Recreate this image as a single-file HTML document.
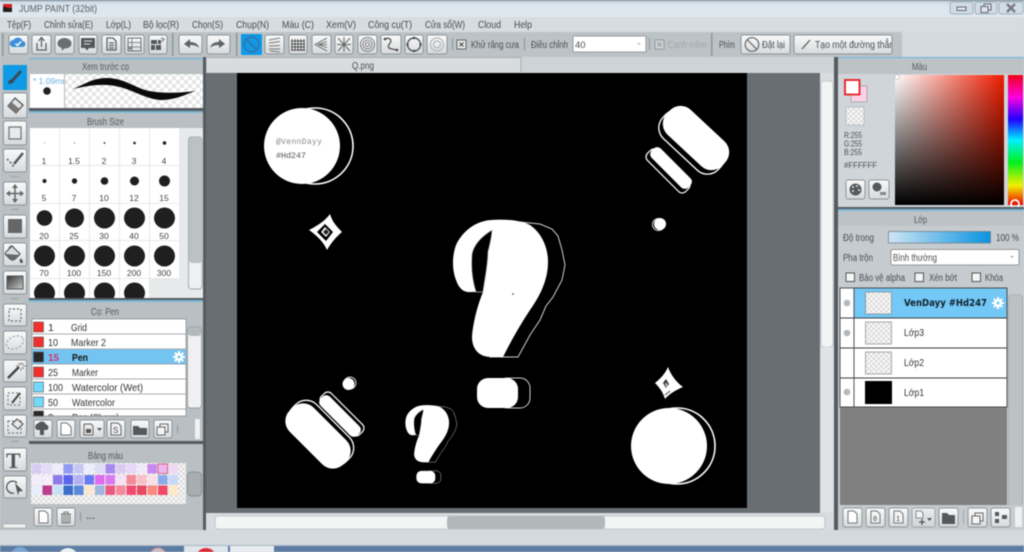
<!DOCTYPE html>
<html><head><meta charset="utf-8"><style>
html,body{margin:0;padding:0;background:#d3d9dc;width:1024px;height:552px;overflow:hidden}
svg{display:block;position:absolute;left:0;top:0;filter:blur(.4px)}
svg svg{position:static;filter:none}
text{font-family:"Liberation Sans",sans-serif;font-size:10px;fill:#4a4d50}
.m{font-size:10.5px;fill:#454a4e}
.b{fill:url(#bg);stroke:#8e9497;stroke-width:1}
.i{fill:#6a6f72}
.l{fill:none;stroke:#5e6366;stroke-width:1.3}
.h{fill:#55595c;font-size:10px}
.s{text-anchor:middle;font-size:8.5px;fill:#444}
.n{font-size:10.5px;fill:#333}
.d{fill:#1f1f1f}
</style></head><body>
<svg width="1024" height="552" viewBox="0 0 1024 552" xmlns="http://www.w3.org/2000/svg">
<defs>
<linearGradient id="bg" x1="0" y1="0" x2="0" y2="1"><stop offset="0" stop-color="#fafbfb"/><stop offset="1" stop-color="#d5d9db"/></linearGradient>
<linearGradient id="tb" x1="0" y1="0" x2="0" y2="1"><stop offset="0" stop-color="#c6d2dc"/><stop offset=".3" stop-color="#dbe6ee"/><stop offset="1" stop-color="#dfe8ee"/></linearGradient>
<linearGradient id="op" x1="0" y1="0" x2="1" y2="0"><stop offset="0" stop-color="#cfe6f5"/><stop offset="1" stop-color="#0a93e0"/></linearGradient>
<linearGradient id="sv1" x1="0" y1="0" x2="1" y2="0"><stop offset="0" stop-color="#fff"/><stop offset="1" stop-color="#f01c00"/></linearGradient>
<linearGradient id="sv2" x1="0" y1="0" x2="0" y2="1"><stop offset="0" stop-color="#000" stop-opacity="0"/><stop offset="1" stop-color="#000"/></linearGradient>
<linearGradient id="hue" x1="0" y1="0" x2="0" y2="1"><stop offset="0" stop-color="#f00018"/><stop offset=".17" stop-color="#ff00e0"/><stop offset=".34" stop-color="#2000ff"/><stop offset=".5" stop-color="#00f0ff"/><stop offset=".67" stop-color="#00f020"/><stop offset=".85" stop-color="#f0f000"/><stop offset="1" stop-color="#f00000"/></linearGradient>
<linearGradient id="gr" x1="0" y1="0" x2="1" y2="1"><stop offset="0" stop-color="#333"/><stop offset="1" stop-color="#ccc"/></linearGradient>
<pattern id="ck" width="8" height="8" patternUnits="userSpaceOnUse"><rect width="8" height="8" fill="#fff"/><rect width="4" height="4" fill="#e6e6e6"/><rect x="4" y="4" width="4" height="4" fill="#e6e6e6"/></pattern>
<pattern id="ck2" width="5" height="5" patternUnits="userSpaceOnUse"><rect width="5" height="5" fill="#f8f8f8"/><rect width="2.5" height="2.5" fill="#dcdcdc"/><rect x="2.5" y="2.5" width="2.5" height="2.5" fill="#dcdcdc"/></pattern>
<g id="qm">
<path fill="#000" stroke="#cfcfcf" stroke-width="1" d="M500 221 L520 222 L540 224 L552 229 L558 236 L562 250 L565 265 L562 280 L553 297 L546 306 L540 320 L530 335 L518 357 L490 357 L490 300 Z"/>
<path fill="#fff" d="M491 220C475 221 462 232 456 245C452 256 452 270 456 280C459 289 464 293 472 292L483 292C478 304 473 322 472 337C472 350 480 357 491 357L503 357C511 341 520 325 530 310C540 296 548 280 548 262C548 245 540 232 530 225C520 220 505 219 491 220Z"/>
<path fill="#000" stroke="#bbb" stroke-width=".7" d="M492 230C484 235 474 243 472 254C471 266 472 280 476 292L483 292C485 278 488 264 488 252C490 244 492 236 492 230Z"/>
<rect x="497" y="378" width="33" height="30" rx="10" fill="#000" stroke="#cfcfcf" stroke-width="1"/>
<rect x="477" y="378" width="41" height="30" rx="11" fill="#fff"/>
</g>
<g id="gear"><circle r="4" fill="#fff"/><g stroke="#fff" stroke-width="2"><path d="M0 -6V6M-6 0H6M-4.2 -4.2L4.2 4.2M4.2 -4.2L-4.2 4.2"/></g><circle r="1.5" fill="#74c8f5"/></g>
</defs>

<!-- base -->
<rect width="1024" height="552" fill="#d3d9dc"/>
<rect width="1024" height="17" fill="url(#tb)"/>
<rect width="1024" height="1" fill="#74858f"/>
<rect x="3" y="4" width="9" height="8" fill="#1e1e1e"/><rect x="3" y="4" width="9" height="3" fill="#d8202c"/><rect x="7" y="4" width="5" height="4" fill="#c22"/>
<text x="19" y="12" textLength="78" lengthAdjust="spacingAndGlyphs" style="font-size:10.5px;fill:#5a5f63">JUMP PAINT (32bit)</text>
<g fill="#d0dce5" stroke="#9fb0bc"><rect x="950" y="2" width="23" height="12" rx="2"/><rect x="975" y="2" width="22" height="12" rx="2"/><rect x="999" y="2" width="24" height="12" rx="2"/></g>
<rect x="957" y="7" width="9" height="3.5" fill="#dfe6ea" stroke="#667"/>
<rect x="984" y="4" width="7" height="6" fill="#dfe6ea" stroke="#667"/><rect x="981" y="6.5" width="7" height="6" fill="#dfe6ea" stroke="#667"/>
<path d="M1007 4L1015 12M1015 4L1007 12" stroke="#778" stroke-width="2.4"/>
<rect y="17" width="1024" height="15" fill="#d6dcdf"/>
<text class="m" x="7" y="28" textLength="24" lengthAdjust="spacingAndGlyphs">Tệp(F)</text><text class="m" x="44" y="28" textLength="49" lengthAdjust="spacingAndGlyphs">Chỉnh sửa(E)</text><text class="m" x="106" y="28" textLength="25" lengthAdjust="spacingAndGlyphs">Lớp(L)</text><text class="m" x="143" y="28" textLength="36" lengthAdjust="spacingAndGlyphs">Bộ lọc(R)</text><text class="m" x="192" y="28" textLength="31" lengthAdjust="spacingAndGlyphs">Chọn(S)</text><text class="m" x="236" y="28" textLength="33" lengthAdjust="spacingAndGlyphs">Chụp(N)</text><text class="m" x="282" y="28" textLength="32" lengthAdjust="spacingAndGlyphs">Màu (C)</text><text class="m" x="326" y="28" textLength="30" lengthAdjust="spacingAndGlyphs">Xem(V)</text><text class="m" x="368" y="28" textLength="44" lengthAdjust="spacingAndGlyphs">Công cụ(T)</text><text class="m" x="425" y="28" textLength="40" lengthAdjust="spacingAndGlyphs">Cửa sổ(W)</text><text class="m" x="478" y="28" textLength="23" lengthAdjust="spacingAndGlyphs">Cloud</text><text class="m" x="514" y="28" textLength="18" lengthAdjust="spacingAndGlyphs">Help</text>

<!-- toolbar -->
<rect y="32" width="902" height="25" fill="#bcc3c6"/>
<g fill="#8e9497"><rect x="2" y="33" width="1.5" height="23"/><rect x="172" y="33" width="1.5" height="23"/><rect x="236" y="33" width="1.5" height="23"/><rect x="452" y="38" width="1" height="12"/><rect x="524" y="38" width="1" height="12"/><rect x="649" y="38" width="1" height="12"/><rect x="711" y="33" width="1.5" height="23"/></g>
<rect class="b" x="9" y="35" width="19" height="19" rx="2"/><rect class="b" x="32" y="35" width="19" height="19" rx="2"/><rect class="b" x="55" y="35" width="19" height="19" rx="2"/><rect class="b" x="79" y="35" width="18" height="19" rx="2"/><rect class="b" x="102" y="35" width="19" height="19" rx="2"/><rect class="b" x="125" y="35" width="19" height="19" rx="2"/><rect class="b" x="149" y="35" width="18" height="19" rx="2"/><rect class="b" x="179" y="35" width="23" height="19" rx="2"/><rect class="b" x="207" y="35" width="23" height="19" rx="2"/><rect class="b" x="265" y="35" width="19" height="19" rx="2"/><rect class="b" x="289" y="35" width="18" height="19" rx="2"/><rect class="b" x="312" y="35" width="19" height="19" rx="2"/><rect class="b" x="335" y="35" width="18" height="19" rx="2"/><rect class="b" x="358" y="35" width="19" height="19" rx="2"/><rect class="b" x="381" y="35" width="20" height="19" rx="2"/><rect class="b" x="405" y="35" width="18" height="19" rx="2"/><rect class="b" x="427" y="35" width="20" height="19" rx="2"/><rect class="b" x="741" y="35" width="49" height="19" rx="2"/><rect class="b" x="794" y="35" width="98" height="19" rx="2"/>
<!-- toolbar icons -->
<path d="M13 47a3.5 3.5 0 0 1 .5-7 5 5 0 0 1 9 1 3 3 0 0 1 0 6z" fill="#3f8fd8"/><path d="M15.5 43.5l2 2 3.5-4" stroke="#fff" stroke-width="1.4" fill="none"/>
<path d="M37 43v7h9v-7M41.5 47v-9M38.5 41l3-3.5 3 3.5" class="l" stroke-width="1.5"/>
<path d="M57.5 43.5c0-3.5 3.5-5.5 7-5.5s7 2 7 5.5-3.5 5-7 5l-3 2.5.5-3c-2.800-.5-4.500-2.500-4.500-4.500z" class="i"/>
<path d="M81 38h14v10h-6l-2 2.500-2-2.500h-4z" fill="#55595c"/><path d="M84 41h8M84 44h6" stroke="#ddd" stroke-width="1"/>
<path d="M107 38h6l3 3v9h-9zM109 43h5M109 45.500h5M109 48h5" class="l" stroke-width="1"/>
<rect x="128" y="38" width="13" height="13" fill="none" stroke="#6a6f72"/><path d="M128 42.500h13M128 47h13M132 38v13" stroke="#6a6f72" stroke-width=".8"/><circle cx="130" cy="48" r="1.800" fill="#888"/>
<g fill="#55595c"><rect x="151" y="40" width="6" height="4"/><rect x="158" y="40" width="3" height="4"/><rect x="151" y="45" width="4" height="5"/><rect x="156" y="45" width="5" height="5"/></g><path d="M161 38l3 1-2 3" stroke="#666" fill="none"/>
<path d="M184 44l6-5v3c5 0 8 2 9 6-2-2-5-3-9-3v3z" fill="#5e6366"/>
<path d="M225 44l-6-5v3c-5 0-8 2-9 6 2-2 5-3 9-3v3z" fill="#5e6366"/>
<rect x="241" y="34" width="21" height="21" rx="1" fill="#0f9ae6"/><circle cx="251.500" cy="44.500" r="7.500" fill="none" stroke="#3a6fa8" stroke-width="1.400"/><path d="M246 39l11 11" stroke="#3a6fa8" stroke-width="1.400"/>
<path d="M269 40l11-2M269 43l11-1.500M269 46l11-.5M269 49l11 0M270 51l10 1" stroke="#777" stroke-width="1"/>
<path d="M292 39v12M295 39v12M298 39v12M301 39v12M304 39v12M291 41h14M291 44h14M291 47h14M291 50h14" stroke="#555" stroke-width="1"/>
<path d="M327 38l-12 6.500 12 6.500M327 41.500l-9 3M327 44.500h-9M327 47.500l-9-3" stroke="#777" fill="none"/>
<path d="M338 38l12 13M350 38l-12 13M344 37v15M337 44.500h14" stroke="#666"/>
<g fill="none" stroke="#777"><circle cx="367.500" cy="44.500" r="7"/><circle cx="367.500" cy="44.500" r="4.500"/><circle cx="367.500" cy="44.500" r="2"/></g>
<path d="M385 39c5-2 7 1 5 4s-3 5 2 6l5 1" fill="none" stroke="#555" stroke-width="1.300"/><circle cx="385" cy="39" r="1.300" fill="#444"/><circle cx="397" cy="50" r="1.300" fill="#444"/>
<circle cx="414" cy="44.500" r="6.500" fill="none" stroke="#555" stroke-width="1.400"/><g fill="#444"><circle cx="414" cy="38" r="1.200"/><circle cx="414" cy="51" r="1.200"/><circle cx="407.500" cy="44.500" r="1.200"/><circle cx="420.500" cy="44.500" r="1.200"/></g>
<g fill="none" stroke="#aaa"><circle cx="437" cy="44.500" r="6.500"/><circle cx="437" cy="44.500" r="3.500"/></g>
<!-- options -->
<rect x="457" y="40" width="9" height="9" fill="#e8eaeb" stroke="#666"/><path d="M459.500 42.500l4 4M463.500 42.500l-4 4" stroke="#444"/>
<text x="471" y="48" textLength="48" lengthAdjust="spacingAndGlyphs">Khử răng cưa</text>
<text x="531" y="48" textLength="37" lengthAdjust="spacingAndGlyphs">Điều chỉnh</text>
<rect x="573" y="36" width="73" height="16" rx="1" fill="#fff" stroke="#999"/>
<text x="575" y="48" style="font-size:9.500px">40</text><path d="M637 43l4 0-2 2z" fill="#bbb"/>
<rect x="655" y="40" width="9" height="9" fill="#cfd3d5" stroke="#999"/><path d="M657.500 42.500l4 4M661.500 42.500l-4 4" stroke="#999"/>
<text x="668" y="48" textLength="39" lengthAdjust="spacingAndGlyphs" style="fill:#a2a7aa">Cạnh mềm</text>
<text x="719" y="48" textLength="16" lengthAdjust="spacingAndGlyphs">Phím</text>
<circle cx="752" cy="44.500" r="6.800" fill="none" stroke="#666" stroke-width="1.200"/><path d="M747 39.500l10 10" stroke="#666" stroke-width="1.200"/>
<text x="762" y="48" textLength="23" lengthAdjust="spacingAndGlyphs">Đặt lại</text>
<path d="M802 49l8-9" stroke="#555" stroke-width="1.200"/>
<svg x="815" y="36" width="77" height="18"><text x="0" y="12" textLength="84" lengthAdjust="spacingAndGlyphs">Tạo một đường thẳng</text></svg>

<!-- tab row -->
<rect x="206" y="57" width="629" height="16" fill="#cdd3d6"/>
<path d="M206 72V57.500H521V72" fill="#d8dcdc" stroke="#a8adaf"/>
<text x="352" y="69" textLength="22" lengthAdjust="spacingAndGlyphs">Q.png</text>

<!-- canvas area -->
<rect x="206" y="73" width="629" height="457" fill="#696e72"/>
<rect x="237" y="73" width="510" height="435" fill="#000"/>
<rect x="820" y="73" width="14" height="440" fill="#d8dcdf"/>
<rect x="821" y="81" width="12" height="266" rx="3" fill="#f3f4f4" stroke="#a8adb0" stroke-width=".6"/>
<rect x="821" y="347" width="12" height="165" fill="#e0e3e5"/>
<rect x="206" y="513" width="629" height="17" fill="#d8dcdf"/>
<rect x="215" y="516" width="610" height="13" rx="3" fill="#f3f4f4" stroke="#a8adb0" stroke-width=".6"/>
<rect x="447" y="516" width="158" height="13" rx="3" fill="#b2b7ba"/>

<!-- artwork -->
<circle cx="315" cy="146" r="38" fill="#000" stroke="#fff" stroke-width="1.600"/>
<circle cx="302" cy="146" r="38" fill="#fff"/>
<text x="276" y="144" textLength="46" lengthAdjust="spacing" style="font-family:'Liberation Mono',monospace;font-size:8px;fill:#888">@VennDayy</text>
<text x="276" y="158" textLength="30" lengthAdjust="spacing" style="font-family:'Liberation Mono',monospace;font-size:8.500px;fill:#555">#Hd247</text>
<path d="M330 214C332 221 336 226 342 232C336 237 331 243 327 250C323 241 316 235 309 230C317 226 325 221 330 214Z" fill="#fff"/>
<path d="M325 224L333 232L326 241L317 232Z" fill="#000"/><path d="M325 227L330 232L326 237L321 232Z" fill="#fff"/><path d="M326 229L329 232L326 235L323 232Z" fill="#222"/>
<use href="#qm"/>
<circle cx="513" cy="294" r=".8" fill="#222"/>
<use href="#qm" transform="translate(197,314) scale(.46,.415)"/>

<rect width="76" height="34" rx="15" transform="translate(692,142) rotate(43) translate(-38,-17)" fill="#000" stroke="#fff" stroke-width="1.300"/>
<rect width="76" height="34" rx="15" transform="translate(696,138) rotate(43) translate(-38,-17)" fill="#fff"/>
<rect width="54" height="14" rx="5" transform="translate(668,171) rotate(45) translate(-27,-7)" fill="#000" stroke="#fff" stroke-width="1.200"/>
<rect width="52" height="13" rx="5" transform="translate(671,168) rotate(45) translate(-26,-6.500)" fill="#fff"/>
<circle cx="658.500" cy="224.500" r="6" fill="#000" stroke="#ddd"/><circle cx="660" cy="224" r="6" fill="#fff"/>

<rect width="76" height="34" rx="15" transform="translate(321,433) rotate(45) translate(-38,-17)" fill="#000" stroke="#fff" stroke-width="1.300"/>
<rect width="76" height="34" rx="15" transform="translate(318,436) rotate(45) translate(-38,-17)" fill="#fff"/>
<rect width="54" height="14" rx="5" transform="translate(342,414) rotate(45) translate(-27,-7)" fill="#000" stroke="#fff" stroke-width="1.200"/>
<rect width="52" height="13" rx="5" transform="translate(340,416) rotate(45) translate(-26,-6.500)" fill="#fff"/>
<circle cx="350" cy="383" r="6" fill="#000" stroke="#ddd"/><circle cx="348.500" cy="384" r="6" fill="#fff"/>

<circle cx="677" cy="446" r="38" fill="#000" stroke="#fff" stroke-width="1.600"/>
<circle cx="669" cy="446" r="38" fill="#fff"/>
<path d="M668 367C671 375 676 382 683 387C676 390 669 394 665 399C663 392 659 387 655 383C660 379 665 374 668 367Z" fill="#fff"/>
<path d="M663 383l3-4 3 5-3 4z" fill="#333"/><path d="M665 383l2 0 .5 3-1.500 1z" fill="#ccc"/><path d="M665 395l5-4" stroke="#444"/>

<!-- left column -->
<rect y="57" width="203" height="473" fill="#b9bfc2"/>
<rect x="203" y="57" width="3" height="473" fill="#565b5f"/>
<rect x="3" y="65" width="24" height="25" rx="1" fill="#0f9ae6"/>
<path d="M21 71L12 81" stroke="#3a4a55" stroke-width="3"/><path d="M12 79c-2 0-4 2-4 5 3 0 6-1 6-3z" fill="#3a4a55"/>
<rect class="b" x="3" y="93" width="24" height="25" rx="2"/><rect class="b" x="3.500" y="121" width="23" height="24" rx="2"/><rect class="b" x="3.500" y="149" width="23" height="23" rx="2"/><rect class="b" x="3.500" y="182" width="23" height="23" rx="2"/><rect class="b" x="3.500" y="215" width="23" height="23" rx="2"/><rect class="b" x="3.500" y="243" width="23" height="23" rx="2"/><rect class="b" x="3.500" y="271" width="23" height="23" rx="2"/><rect class="b" x="3.500" y="304" width="23" height="22" rx="2"/><rect class="b" x="3.500" y="331" width="23" height="23" rx="2"/><rect class="b" x="3.500" y="360" width="23" height="22" rx="2"/><rect class="b" x="3.500" y="387" width="23" height="23" rx="2"/><rect class="b" x="3.500" y="415" width="23" height="22" rx="2"/><rect class="b" x="3.500" y="448" width="23" height="23" rx="2"/><rect class="b" x="3.500" y="476" width="23" height="22" rx="2"/>
<path d="M8 106l7-8 8 7-7 8z" fill="#dfe2e3" stroke="#555" stroke-width="1.300"/><path d="M8 106l3.500-4 8 7-3.500 4z" fill="#777"/>
<rect x="9" y="127" width="12" height="12" fill="#e8eaeb" stroke="#777" stroke-width="1.300"/>
<path d="M7 159l4 4 3 4" fill="none" stroke="#555" stroke-dasharray="2 2" stroke-width="1.500"/><path d="M14 164l9-11" stroke="#555" stroke-width="2.500"/>
<path d="M15 186v15M8 193.500h14" stroke="#666" stroke-width="1.500"/><path d="M15 184l3 4h-6zM15 203l3-4h-6zM6 193.500l4-3v6zM24 193.500l-4-3v6z" fill="#666"/>
<rect x="8" y="219" width="14" height="14" fill="#666"/>
<path d="M6 252l6-6 8 8-5 5c-2 1-4 1-5 0l-4-4c-1-1-1-2 0-3z" fill="#dadcdd" stroke="#555" stroke-width="1.200"/><path d="M6 254l14 1-5 5-3 1z" fill="#666"/><path d="M21 258c1 2 2 3 2 4s-2 2-3 0 0-2 1-4z" fill="#555"/><path d="M9 249c0-4 5-4 5 0" fill="none" stroke="#555"/>
<rect x="7" y="276" width="16" height="13" fill="url(#gr)" stroke="#555"/>
<rect x="9" y="309" width="12" height="12" fill="none" stroke="#666" stroke-dasharray="2 2" stroke-width="1.200"/>
<ellipse cx="15" cy="342.500" rx="9" ry="6" transform="rotate(-25 15 342.500)" fill="none" stroke="#999" stroke-dasharray="2 2" stroke-width="1.200"/>
<path d="M8 378l11-11" stroke="#444" stroke-width="2.500"/><g stroke="#888"><path d="M21 362v3M21 368v3M16 366h3M23 366h3M18 363l2 2M24 363l-2 2M24 369l-2-2"/></g>
<rect x="8" y="393" width="12" height="12" fill="none" stroke="#666" stroke-dasharray="2 2"/><path d="M12 403l8-10" stroke="#444" stroke-width="2"/>
<rect x="8" y="421" width="13" height="12" fill="none" stroke="#666" stroke-dasharray="2 2"/><path d="M12 424l5-5 6 5-5 5z" fill="#e6e8e9" stroke="#444"/>
<text x="6" y="468" style="font-family:'Liberation Serif',serif;font-size:22px;font-weight:bold;fill:#555">T</text>
<path d="M14 493a6 6 0 1 1 3-10" fill="none" stroke="#555" stroke-width="1.300"/><path d="M15 483l8 8-4 .5-1 4z" fill="#555"/>
<rect x="3" y="524" width="23" height="4" rx="1" fill="#eef0f0" stroke="#999" stroke-width=".6"/>
<g fill="#9aa0a3"><rect x="11" y="176" width="8" height="1"/><rect x="11" y="209" width="8" height="1"/><rect x="11" y="298" width="8" height="1"/><rect x="11" y="441" width="8" height="1"/></g>

<!-- panel: preview -->
<rect x="29" y="58" width="174" height="1.500" fill="#7db8d8"/>
<text class="h" x="82" y="70" textLength="47" lengthAdjust="spacingAndGlyphs">Xem trước cọ</text>
<rect x="30" y="74" width="173" height="34" fill="url(#ck)"/>
<rect x="30" y="74" width="34" height="34" fill="#fff"/>
<rect x="64" y="74" width="1" height="34" fill="#bbb"/>
<svg x="30" y="74" width="34" height="34"><text x="3" y="10" style="font-size:8.500px;fill:#6aaede">* 1.09mm</text></svg>
<circle cx="47" cy="91" r="3.800" fill="#222"/>
<path d="M73 89C85 84 93 78 107 78C122 78 133 86 145 90C160 94 180 93 195 91C187 94 178 99 163 100C148 100 135 91 120 87C105 83 90 85 73 89Z" fill="#0a0a0a"/>
<rect x="29" y="108" width="174" height="3" fill="#565b5f"/>
<rect x="29" y="111" width="174" height="2" fill="#7db8d8"/>

<!-- panel: brush size -->
<text class="h" x="87" y="125" textLength="37" lengthAdjust="spacingAndGlyphs">Brush Size</text>
<rect x="30" y="128" width="173" height="170" fill="#e7eaeb"/>
<g fill="#fff">
<rect x="30" y="128" width="29" height="37"/><rect x="60" y="128" width="29" height="37"/><rect x="90" y="128" width="29" height="37"/><rect x="120" y="128" width="29" height="37"/><rect x="150" y="128" width="29" height="37"/>
<rect x="30" y="166" width="29" height="37"/><rect x="60" y="166" width="29" height="37"/><rect x="90" y="166" width="29" height="37"/><rect x="120" y="166" width="29" height="37"/><rect x="150" y="166" width="29" height="37"/>
<rect x="30" y="204" width="29" height="36"/><rect x="60" y="204" width="29" height="36"/><rect x="90" y="204" width="29" height="36"/><rect x="120" y="204" width="29" height="36"/><rect x="150" y="204" width="29" height="36"/>
<rect x="30" y="241" width="29" height="37"/><rect x="60" y="241" width="29" height="37"/><rect x="90" y="241" width="29" height="37"/><rect x="120" y="241" width="29" height="37"/><rect x="150" y="241" width="29" height="37"/>
<rect x="30" y="279" width="29" height="19"/><rect x="60" y="279" width="29" height="19"/><rect x="90" y="279" width="29" height="19"/><rect x="120" y="279" width="29" height="19"/>
</g>
<circle class="d" cx="44.500" cy="143" r=".4"/><circle class="d" cx="74.500" cy="143" r=".5"/><circle class="d" cx="104.500" cy="143" r=".9"/><circle class="d" cx="134.500" cy="143" r="1.300"/><circle class="d" cx="164.500" cy="143" r="1.800"/>
<circle class="d" cx="44.500" cy="181" r="2"/><circle class="d" cx="74.500" cy="181" r="2.700"/><circle class="d" cx="104.500" cy="181" r="3.800"/><circle class="d" cx="134.500" cy="181" r="4.500"/><circle class="d" cx="164.500" cy="181" r="5.500"/>
<circle class="d" cx="44.500" cy="218" r="7.800"/><circle class="d" cx="74.500" cy="218" r="9.500"/><circle class="d" cx="104.500" cy="218" r="10.500"/><circle class="d" cx="134.500" cy="218" r="10.500"/><circle class="d" cx="164.500" cy="218" r="10.500"/>
<circle class="d" cx="44.500" cy="256" r="10.500"/><circle class="d" cx="74.500" cy="256" r="10.500"/><circle class="d" cx="104.500" cy="256" r="10.500"/><circle class="d" cx="134.500" cy="256" r="10.500"/><circle class="d" cx="164.500" cy="256" r="10.500"/>
<svg x="30" y="279" width="150" height="19"><circle class="d" cx="14.500" cy="14" r="10.500"/><circle class="d" cx="44.500" cy="14" r="10.500"/><circle class="d" cx="74.500" cy="14" r="10.500"/><circle class="d" cx="104.500" cy="14" r="10.500"/></svg>
<text class="s" x="44" y="164">1</text><text class="s" x="74" y="164">1.5</text><text class="s" x="104" y="164">2</text><text class="s" x="134" y="164">3</text><text class="s" x="164" y="164">4</text>
<text class="s" x="44" y="201">5</text><text class="s" x="74" y="201">7</text><text class="s" x="104" y="201">10</text><text class="s" x="134" y="201">12</text><text class="s" x="164" y="201">15</text>
<text class="s" x="44" y="239">20</text><text class="s" x="74" y="239">25</text><text class="s" x="104" y="239">30</text><text class="s" x="134" y="239">40</text><text class="s" x="164" y="239">50</text>
<text class="s" x="44" y="276">70</text><text class="s" x="74" y="276">100</text><text class="s" x="104" y="276">150</text><text class="s" x="134" y="276">200</text><text class="s" x="164" y="276">300</text>
<rect x="188.500" y="137" width="13.500" height="152" rx="3" fill="#eef0f1" stroke="#888e91" stroke-width=".7"/>
<rect x="189" y="137" width="13" height="126" rx="3" fill="#bcc1c4"/>
<rect x="29" y="298" width="174" height="2" fill="#565b5f"/>
<rect x="29" y="300" width="174" height="2" fill="#7db8d8"/>

<!-- panel: pen -->
<text class="h" x="91" y="315" textLength="28" lengthAdjust="spacingAndGlyphs">Cọ: Pen</text>
<rect x="32" y="319" width="154" height="97" fill="#fff" stroke="#777" stroke-width=".6"/>
<rect x="32" y="349.500" width="154" height="14.500" fill="#74c4f2"/>
<path d="M32 334H186M32 349H186M32 364H186M32 379H186M32 394H186M32 409H186" stroke="#8a8f92" stroke-width=".8"/>
<g stroke="#555" stroke-width=".6"><rect x="33.500" y="322" width="10" height="10" fill="#f0302c"/><rect x="33.500" y="337" width="10" height="10" fill="#f0302c"/><rect x="33.500" y="352" width="10" height="10" fill="#282828"/><rect x="33.500" y="367" width="10" height="10" fill="#f0302c"/><rect x="33.500" y="382" width="10" height="10" fill="#74d8fa"/><rect x="33.500" y="397" width="10" height="10" fill="#74d8fa"/><rect x="33.500" y="411" width="10" height="5" fill="#282828"/></g>
<text class="n" x="48" y="331">1</text><text class="n" x="71" y="331" textLength="16" lengthAdjust="spacingAndGlyphs">Grid</text>
<text class="n" x="48" y="346" textLength="10" lengthAdjust="spacingAndGlyphs">10</text><text class="n" x="71" y="346" textLength="35" lengthAdjust="spacingAndGlyphs">Marker 2</text>
<text class="n" x="48" y="361" textLength="11" lengthAdjust="spacingAndGlyphs" style="fill:#c8346a;font-weight:bold">15</text><text class="n" x="72" y="361" textLength="16" lengthAdjust="spacingAndGlyphs" style="font-weight:bold;fill:#111">Pen</text>
<text class="n" x="48" y="376" textLength="10" lengthAdjust="spacingAndGlyphs">25</text><text class="n" x="72" y="376" textLength="26" lengthAdjust="spacingAndGlyphs">Marker</text>
<text class="n" x="48" y="391" textLength="15" lengthAdjust="spacingAndGlyphs">100</text><text class="n" x="72" y="391" textLength="71" lengthAdjust="spacingAndGlyphs">Watercolor (Wet)</text>
<text class="n" x="48" y="406" textLength="10" lengthAdjust="spacingAndGlyphs">50</text><text class="n" x="72" y="406" textLength="43" lengthAdjust="spacingAndGlyphs">Watercolor</text>
<svg x="32" y="409" width="154" height="7"><text class="n" x="16" y="12">9</text><text class="n" x="40" y="12" textLength="47" lengthAdjust="spacingAndGlyphs">Pen (Sharp)</text></svg>
<use href="#gear" transform="translate(179,357)"/>
<rect x="187.500" y="327" width="14" height="81" rx="3" fill="#eef0f1" stroke="#888e91" stroke-width=".7"/>
<rect x="188" y="327" width="13" height="9" rx="3" fill="#b4b9bc"/>
<rect class="b" x="34" y="420" width="18" height="18" rx="2"/><rect class="b" x="57" y="420" width="18" height="18" rx="2"/><rect class="b" x="80" y="420" width="24" height="18" rx="2"/><rect class="b" x="107" y="420" width="18" height="18" rx="2"/><rect class="b" x="131" y="420" width="18" height="18" rx="2"/><rect class="b" x="154" y="420" width="18" height="18" rx="2"/>
<path d="M37 430a3.500 3.500 0 0 1 1-6.500 4.500 4.500 0 0 1 8 1 3 3 0 0 1 1 5.500h-3v5h-4v-5z" fill="#55595c"/>
<path d="M61 423h6l4 4v8H61z" fill="#fff" stroke="#777"/>
<path d="M84 424h7l2 2v9h-9z" fill="#e8e8e8" stroke="#666"/><rect x="86" y="429" width="5" height="4" fill="#555"/><path d="M97 428h5l-2.500 3z" fill="#555"/>
<path d="M111 423h7l3 3v9h-10z" fill="#f0f0f0" stroke="#666"/><text x="113" y="433" style="font-size:8px">S</text>
<path d="M133 426h5l2 2h7v7h-14z" fill="#55595c"/>
<rect x="160" y="424" width="8" height="8" fill="#f4f4f4" stroke="#666"/><rect x="157" y="427" width="8" height="8" fill="#f4f4f4" stroke="#666"/>
<rect x="177" y="425" width="1" height="8" fill="#8e9497"/>
<rect x="195" y="419" width="5" height="20" fill="#f0f2f2"/>
<rect x="29" y="441" width="174" height="3" fill="#565b5f"/>

<!-- palette -->
<text class="h" x="88" y="459" textLength="35" lengthAdjust="spacingAndGlyphs">Bảng màu</text>
<rect x="31" y="463" width="155" height="41" fill="url(#ck2)"/>
<rect x="32" y="464" width="9.500" height="9.500" fill="#d4ccf5"/><rect x="42.500" y="464" width="9.500" height="9.500" fill="#e2dcf9"/><rect x="53" y="464" width="9.500" height="9.500" fill="#f0ecfb"/><rect x="63.500" y="464" width="9.500" height="9.500" fill="#8f9bf0"/><rect x="74" y="464" width="9.500" height="9.500" fill="#c5c8f5"/><rect x="84.500" y="464" width="9.500" height="9.500" fill="#eceefb"/><rect x="95" y="464" width="9.500" height="9.500" fill="#dedcf5"/><rect x="105.500" y="464" width="9.500" height="9.500" fill="#a78af0"/><rect x="116" y="464" width="9.500" height="9.500" fill="#dccaf5"/><rect x="126.500" y="464" width="9.500" height="9.500" fill="#e6d8f8"/><rect x="137" y="464" width="9.500" height="9.500" fill="#f0eafb"/><rect x="147.500" y="464" width="9.500" height="9.500" fill="#c98af0"/><rect x="158" y="464" width="9.500" height="9.500" fill="#e8b8ee" stroke="#d86a7a"/><rect x="168.500" y="464" width="9.500" height="9.500" fill="#eed8f5"/>
<rect x="32" y="475" width="9.500" height="9.500" fill="#f3eefb"/><rect x="42.500" y="475" width="9.500" height="9.500" fill="#f6eefa"/><rect x="53" y="475" width="9.500" height="9.500" fill="#8d7bec"/><rect x="63.500" y="475" width="9.500" height="9.500" fill="#5a67ec"/><rect x="74" y="475" width="9.500" height="9.500" fill="#b4b0f5"/><rect x="84.500" y="475" width="9.500" height="9.500" fill="#6a7af0"/><rect x="95" y="475" width="9.500" height="9.500" fill="#e06af0"/><rect x="105.500" y="475" width="9.500" height="9.500" fill="#d97af0"/><rect x="116" y="475" width="9.500" height="9.500" fill="#f6e0f5"/><rect x="126.500" y="475" width="9.500" height="9.500" fill="#f58a9a"/><rect x="137" y="475" width="9.500" height="9.500" fill="#f8c0c8"/><rect x="147.500" y="475" width="9.500" height="9.500" fill="#fae0e4"/><rect x="158" y="475" width="9.500" height="9.500" fill="#8aaaea"/><rect x="168.500" y="475" width="9.500" height="9.500" fill="#c8daf8"/>
<rect x="32" y="485.500" width="9.500" height="9.500" fill="#e8eefb"/><rect x="42.500" y="485.500" width="9.500" height="9.500" fill="#b83f90"/><rect x="53" y="485.500" width="9.500" height="9.500" fill="#c8e0f5"/><rect x="63.500" y="485.500" width="9.500" height="9.500" fill="#3a6ecc"/><rect x="74" y="485.500" width="9.500" height="9.500" fill="#5a8ad8"/><rect x="84.500" y="485.500" width="9.500" height="9.500" fill="#fae8d0"/><rect x="95" y="485.500" width="9.500" height="9.500" fill="#a0b4dc"/><rect x="105.500" y="485.500" width="9.500" height="9.500" fill="#ea5a80"/><rect x="116" y="485.500" width="9.500" height="9.500" fill="#f58a9c"/><rect x="126.500" y="485.500" width="9.500" height="9.500" fill="#f04a70"/><rect x="137" y="485.500" width="9.500" height="9.500" fill="#e84a64"/><rect x="147.500" y="485.500" width="9.500" height="9.500" fill="#f88a80"/><rect x="158" y="485.500" width="9.500" height="9.500" fill="#f04a68"/><rect x="168.500" y="485.500" width="9.500" height="9.500" fill="#fde8c8"/>
<rect x="187.500" y="472" width="14" height="24" rx="4" fill="#a8adb0" stroke="#7d8285" stroke-width=".7"/>
<rect class="b" x="34" y="508" width="18" height="18" rx="2"/><rect class="b" x="57" y="508" width="18" height="18" rx="2"/>
<path d="M39 511h6l3 3v9h-9z" fill="#fff" stroke="#777"/>
<path d="M61 514h10M62 514v9h8v-9M64 514v9M66 514v9M68 514v9M64 514v-2h4v2" fill="none" stroke="#777"/>
<rect x="80" y="512" width="1" height="9" fill="#8e9497"/>
<text x="86" y="521" style="font-size:9px">---</text>

<!-- right dark gap -->
<rect x="834" y="57" width="4" height="473" fill="#565b5f"/>
<!-- colour panel -->
<rect x="838" y="57" width="186" height="150" fill="#cfd5d8"/>
<rect x="838" y="57" width="186" height="1.500" fill="#7db8d8"/>
<rect x="838" y="59" width="186" height="15" fill="#bcc2c5"/>
<text class="h" x="912" y="70" textLength="15" lengthAdjust="spacingAndGlyphs">Màu</text>
<rect x="851" y="86" width="16" height="16" fill="#fbd0e8" stroke="#999" stroke-width=".7"/>
<rect x="845" y="80" width="14.500" height="14.500" fill="#fff" stroke="#e81c20" stroke-width="1.800"/>
<rect x="846" y="107" width="18" height="18" fill="url(#ck2)" stroke="#aaa" stroke-width=".6"/>
<text x="844" y="138" textLength="18" lengthAdjust="spacingAndGlyphs" style="font-size:8.500px">R:255</text><text x="844" y="146.500" textLength="18" lengthAdjust="spacingAndGlyphs" style="font-size:8.500px">G:255</text><text x="844" y="155" textLength="18" lengthAdjust="spacingAndGlyphs" style="font-size:8.500px">B:255</text><text x="844" y="168" textLength="33" lengthAdjust="spacingAndGlyphs" style="font-size:8.500px">#FFFFFF</text>
<rect class="b" x="846" y="180" width="19" height="19" rx="2"/><rect class="b" x="869" y="180" width="20" height="19" rx="2"/>
<circle cx="855.500" cy="189.500" r="6" fill="#55595c"/><g fill="#ddd"><circle cx="853" cy="187" r="1"/><circle cx="857" cy="186" r="1"/><circle cx="859" cy="190" r="1"/><circle cx="853" cy="191" r="1"/></g>
<circle cx="877" cy="187" r="4.500" fill="#55595c"/><path d="M880 192h6v3h-6z" fill="#888"/>
<rect x="895" y="75" width="109" height="130" fill="url(#sv1)"/>
<rect x="895" y="75" width="109" height="130" fill="url(#sv2)"/>
<circle cx="897" cy="77" r="2.500" fill="#fff" stroke="#999" stroke-width=".5"/>
<rect x="1008" y="75" width="15" height="130" fill="url(#hue)"/>
<circle cx="1015" cy="204" r="4" fill="none" stroke="#fff" stroke-width="1.800"/>
<rect x="838" y="207" width="186" height="2" fill="#565b5f"/>
<rect x="838" y="209" width="186" height="2" fill="#7db8d8"/>
<!-- layer panel -->
<rect x="838" y="211" width="186" height="319" fill="#c5cbce"/>
<rect x="838" y="211" width="186" height="15" fill="#bcc2c5"/>
<text class="h" x="914" y="223" textLength="13" lengthAdjust="spacingAndGlyphs">Lớp</text>
<text x="843" y="241" textLength="31" lengthAdjust="spacingAndGlyphs">Độ trong</text>
<rect x="888.500" y="231.500" width="102" height="11.500" fill="url(#op)" stroke="#6a7a85" stroke-width=".7"/>
<text x="996" y="241" textLength="23" lengthAdjust="spacingAndGlyphs">100 %</text>
<text x="843" y="261" textLength="30" lengthAdjust="spacingAndGlyphs">Pha trộn</text>
<rect x="891" y="249.500" width="128" height="15.500" rx="1" fill="#fff" stroke="#999"/>
<text x="893" y="261" textLength="44" lengthAdjust="spacingAndGlyphs">Bình thường</text><path d="M1010 256h4l-2 2z" fill="#aaa"/>
<g fill="#f4f5f5" stroke="#555"><rect x="846" y="273" width="8.500" height="8.500"/><rect x="915" y="273" width="8.500" height="8.500"/><rect x="972" y="273" width="8.500" height="8.500"/></g>
<text x="859" y="281" textLength="46" lengthAdjust="spacingAndGlyphs">Bảo vệ alpha</text><text x="929" y="281" textLength="28" lengthAdjust="spacingAndGlyphs">Xén bớt</text><text x="985" y="281" textLength="18" lengthAdjust="spacingAndGlyphs">Khóa</text>
<rect x="840" y="407" width="167" height="98" fill="#808080"/>
<rect x="840" y="288" width="167" height="119" fill="#fff"/>
<rect x="854" y="288" width="153" height="30" fill="#74c8f5"/>
<g stroke="#3a3f42" stroke-width=".9"><rect x="840" y="288" width="167" height="119" fill="none"/><path d="M840 318H1007M840 348H1007M840 378H1007M854 288V407"/></g>
<g stroke="#777" stroke-width=".6"><rect x="865.500" y="292" width="26" height="22" fill="url(#ck2)"/><rect x="865.500" y="322" width="26" height="22" fill="url(#ck2)"/><rect x="865.500" y="352" width="26" height="22" fill="url(#ck2)"/></g>
<rect x="865" y="381" width="27" height="23" fill="#000"/>
<g fill="#b4b8ba"><circle cx="847" cy="303" r="3.300"/><circle cx="847" cy="333" r="3.300"/><circle cx="847" cy="392" r="3.300"/></g>
<text x="904" y="306" textLength="83" lengthAdjust="spacingAndGlyphs" style="font-family:'DejaVu Sans',sans-serif;font-weight:bold;font-size:9.500px;fill:#10202c">VenDayy #Hd247</text>
<text class="n" x="904" y="336" textLength="20" lengthAdjust="spacingAndGlyphs">Lớp3</text><text class="n" x="904" y="366" textLength="20" lengthAdjust="spacingAndGlyphs">Lớp2</text><text class="n" x="904" y="396" textLength="20" lengthAdjust="spacingAndGlyphs">Lớp1</text>
<use href="#gear" transform="translate(998,303)"/>
<rect x="1008.500" y="295" width="14" height="211" rx="3" fill="#bcc1c4" stroke="#9aa0a3" stroke-width=".6"/>
<rect x="838" y="505" width="186" height="25" fill="#c5cbce"/>
<rect class="b" x="843" y="508" width="19" height="19" rx="2"/><rect class="b" x="866" y="508" width="19" height="19" rx="2"/><rect class="b" x="889" y="508" width="19" height="19" rx="2"/><rect class="b" x="912" y="508" width="23" height="19" rx="2" style="opacity:.7"/><rect class="b" x="939" y="508" width="19" height="19" rx="2"/><rect class="b" x="968" y="508" width="19" height="19" rx="2"/><rect class="b" x="991" y="508" width="19" height="19" rx="2"/>
<path d="M848 511h6l3 3v9h-9z" fill="#fff" stroke="#777"/>
<path d="M871 511h6l3 3v9h-9z" fill="#f4f4f4" stroke="#777"/><text x="873" y="521" style="font-size:7.500px">8</text>
<path d="M894 511h6l3 3v9h-9z" fill="#f4f4f4" stroke="#777"/><text x="896" y="521" style="font-size:7.500px">1</text>
<path d="M916 511h5l2 2v5h-7z" fill="#f4f4f4" stroke="#888"/><path d="M922 519v6M919 522h6" stroke="#555" stroke-width="1.300"/><path d="M927 518h5l-2.500 3z" fill="#555"/>
<path d="M942 513h5l2 2h6v9h-13z" fill="#55595c"/>
<rect x="963" y="510" width="1" height="14" fill="#a0a5a8"/>
<rect x="975" y="513" width="8" height="8" fill="#f4f4f4" stroke="#666"/><rect x="972" y="516" width="8" height="8" fill="#f4f4f4" stroke="#666"/>
<g fill="#55595c"><rect x="995" y="512" width="4" height="4"/><rect x="995" y="519" width="4" height="4"/><rect x="1002" y="515" width="5" height="4"/></g>
<rect x="1015" y="507" width="7" height="20" rx="1" fill="#eef0f1"/>

<!-- taskbar -->
<rect y="530" width="1024" height="16" fill="#d3d9dc"/>
<rect y="546" width="1024" height="6" fill="#5d7ca3"/>
<rect y="545" width="1024" height="1" fill="#a8b8c8"/>
<circle cx="20" cy="556" r="9" fill="#7aa4d4"/>
<circle cx="68" cy="558" r="10" fill="#eef2f6"/>
<circle cx="158" cy="556" r="8" fill="#c8c0c8" stroke="#d88" stroke-width="1"/>
<rect x="184" y="546" width="44" height="6" fill="#dfe6ec"/>
<circle cx="206" cy="558" r="10" fill="#e02830"/>
<rect x="230" y="546" width="44" height="6" fill="#e8ecf0"/>
</svg>
</body></html>
